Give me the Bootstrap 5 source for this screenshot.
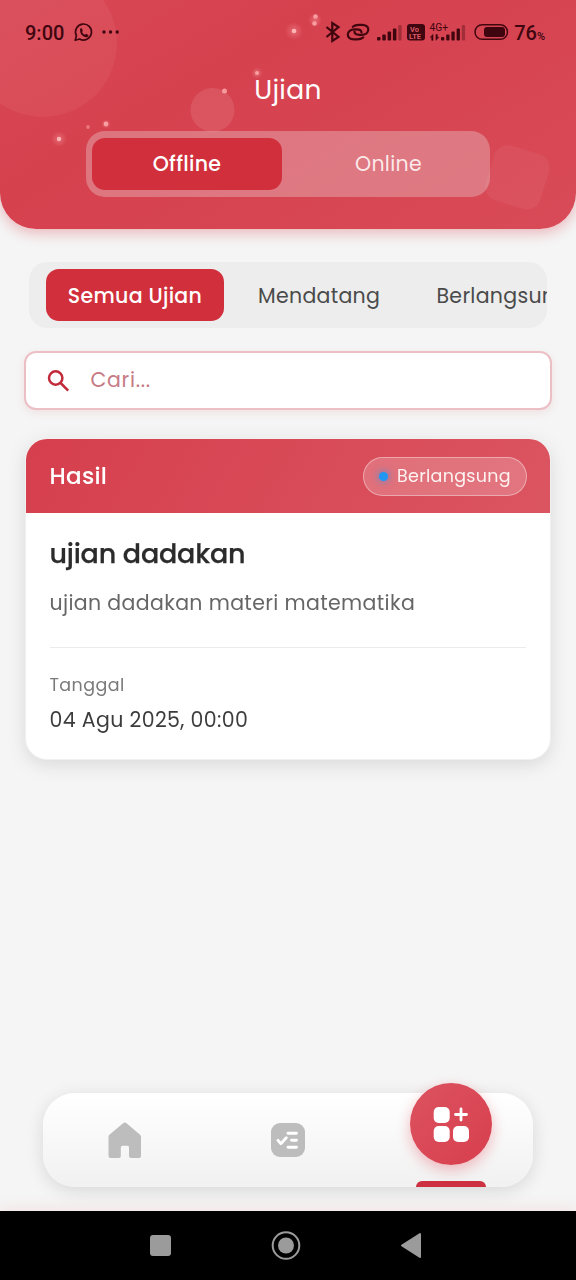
<!DOCTYPE html>
<html lang="id">
<head>
<meta charset="utf-8">
<meta name="viewport" content="width=device-width, initial-scale=1">
<title>Ujian</title>
<link href="https://cdn.jsdelivr.net/npm/bootstrap@5.3.0/dist/css/bootstrap.min.css" rel="stylesheet">
<style>
:root{--brand:#d12f3c}
body{font-family:Poppins,Inter,"Open Sans",sans-serif;background:#f5f5f5;height:1280px;overflow:hidden;line-height:1;letter-spacing:.3px}
.app{width:576px;height:1280px}
.hero{height:229px;border-radius:0 0 36px 36px;background:linear-gradient(150deg,#d94855 0%,#d6414e 35%,#d74552 65%,#d94b58 100%);box-shadow:0 4px 14px rgba(209,47,60,.32);overflow:hidden}
.statusbar{height:64px;padding:2px 31px 0 25px;font-family:Roboto,sans-serif;font-size:20px;font-weight:500;color:#40060f;letter-spacing:0}
.deco{position:absolute;inset:0}
.title{font-size:26.5px;font-weight:400;height:52px;line-height:52px;letter-spacing:.3px}
.seg{width:404px;height:66px;border-radius:19px;padding:7px 6px;margin-top:15px;background:rgba(232,190,195,.42)}
.seg-item{font-size:20.5px;border-radius:13px;color:rgba(255,244,244,.93)}
.seg-on{background:var(--brand);color:#fff;font-weight:500;width:190px}
.seg-off{padding-left:11px}
.tabs{margin:33px 29px 0;height:66px;border-radius:18px;background:#ededed;padding:7px 17px;overflow:hidden;font-size:20.5px;color:#4a4a4a}
.tabs span{padding-top:2px}
.tab-on{width:178px;border-radius:13px;background:var(--brand);color:#fff;font-weight:500}
.tab-next{margin-left:34px;width:178.500px}
.search{margin:23px 24px 0;height:59px;border:2.5px solid #ecbfc5;border-radius:12px;background:#fff;padding-left:19.500px;gap:19px;color:#c67a84;font-size:20.5px;letter-spacing:.7px;box-shadow:0 3px 8px rgba(209,47,60,.1)}
.exam{margin:28px 25px 0;height:322px;border:1px solid #f0f0f0;border-radius:22px;overflow:hidden;background:#fff}
.exam-wrap{filter:drop-shadow(0 5px 9px rgba(0,0,0,.11))}
.exam-head{height:74px;padding:0 23px 0 23.500px;background:linear-gradient(120deg,#d63f4d,#db5561);color:#fff;font-size:23px;font-weight:500}
.pill{height:39px;width:164px;border:1px solid rgba(255,255,255,.38);background:rgba(255,255,255,.2);font-size:17.5px;font-weight:400;padding-left:15px;gap:9px;color:rgba(255,250,248,.95)}
.pill span{padding-top:1px}
.dot{width:9px;height:9px;background:#2196f3;box-shadow:0 0 6px 2px rgba(33,150,243,.4)}
.exam-body{padding:0 24px 0 23.500px}
.name{font-size:27px;font-weight:500;color:#2b2b2b;height:81px;line-height:81px;letter-spacing:-.22px;-webkit-text-stroke:.25px #2b2b2b}
.desc{font-size:20.5px;color:#666;height:53.500px;line-height:18px;border-bottom:1.5px solid #ebebeb;letter-spacing:.36px}
.lab{font-size:17.5px;color:#7a7a7a;line-height:20px;margin-top:27.500px;letter-spacing:.4px}
.when{font-size:20.5px;color:#3c3c3c;line-height:24px;margin-top:13px;letter-spacing:.36px}
.dock{left:43px;top:1093px;width:490px;height:94px;border-radius:32px;background:linear-gradient(#fff,#f1f1f1);box-shadow:0 4px 18px rgba(0,0,0,.12)}
.fab{width:82px;height:82px;left:367px;top:-10px;border-radius:50%;background:linear-gradient(135deg,#dc5260,#d83f4d);box-shadow:0 5px 14px rgba(225,50,65,.32)}
.ind{left:373px;bottom:0;width:70px;height:6px;border-radius:6px 6px 0 0;background:#cd3040}
.sysnav{left:0;top:1211px;width:576px;height:69px;background:#000;box-shadow:0 -4px 14px rgba(225,50,65,.08)}
</style>
</head>
<body>
<div class="app position-relative overflow-hidden">
<header class="hero position-relative">
  <svg class="deco" width="576" height="229">
    <defs><radialGradient id="glow"><stop offset="0" stop-color="#ffb0b0" stop-opacity=".35"/><stop offset="1" stop-color="#ffb0b0" stop-opacity="0"/></radialGradient></defs>
    <circle cx="43" cy="43" r="74" fill="#fff" opacity=".05"/>
    <circle cx="212.500" cy="110" r="22" fill="#fff" opacity=".1"/>
    <rect x="489" y="149" width="57" height="57" rx="14" transform="rotate(17 518 177)" fill="#fff" opacity=".05"/>
    <g fill="url(#glow)"><circle cx="59" cy="139" r="8"/><circle cx="294" cy="31" r="9"/><circle cx="257" cy="73" r="6"/><circle cx="315" cy="20" r="7"/><circle cx="106" cy="124" r="5"/></g>
    <g fill="#ffb5b5"><circle cx="59" cy="139" r="2.200"/><circle cx="294" cy="31" r="2.300"/><g opacity=".75"><circle cx="257" cy="73" r="2"/><circle cx="315.500" cy="16.500" r="2.300"/><circle cx="314.500" cy="23.500" r="2.300"/><circle cx="106" cy="124" r="2.400"/><circle cx="224.500" cy="91" r="2.500"/></g><circle cx="88" cy="127" r="1.900" opacity=".45"/></g>
  </svg>
  <div class="statusbar position-relative d-flex align-items-center">
    <span>9:00</span>
    <svg class="deco" width="576" height="64" fill="none" stroke="#40060f">
      <path d="M75.200 40.200l1.200-4.500a8 8 0 1 1 3.200 3.300z" stroke-width="1.700" stroke-linejoin="round"/>
      <path d="M80.300 28.500l1.200-.4 1.400 2.600-.9 1.300c.7 1.500 1.600 2.200 3 2.800l1.200-1 2.300 1.400c-.2 1.900-2 2.300-3.600 1.700-3.200-1.200-5.500-3.900-4.600-8.400z" fill="#40060f" stroke="none"/>
      <g fill="#40060f" stroke="none"><circle cx="104" cy="32" r="1.700"/><circle cx="110.500" cy="32" r="1.700"/><circle cx="117.200" cy="32" r="1.700"/></g>
      <path d="M326.500 27l12 10-6.200 4V23l6.200 4-12 10" stroke-width="2.200"/>
      <g stroke-width="2.200" stroke-linecap="round"><path d="M352.800 26.800C354.500 25.200 356.500 24.800 359 24.800H362C366 24.800 368.300 27 368.300 29.500C368.300 32.500 365.500 34.800 361.500 34.800H359.500C356.500 34.800 354.500 33.500 354.500 31.500"/><path d="M363.200 37.400C361.500 38.900 359.500 39.300 357 39.300H354C350 39.300 347.800 37.200 347.800 34.600C347.800 31.600 350.500 29.300 354.500 29.300H356.500C359.500 29.300 361.500 30.500 361.500 32.500"/></g>
      <g fill="#40060f" stroke="none"><rect x="377" y="37" width="3.500" height="3.500" rx="1"/><rect x="382.300" y="34.500" width="3.500" height="6" rx="1"/><rect x="387.600" y="31.500" width="3.500" height="9" rx="1"/><rect x="392.900" y="28.500" width="3.500" height="12" rx="1"/><rect x="398.300" y="25" width="3.300" height="15.500" rx="1" opacity=".35"/>
      <rect x="407" y="24" width="18" height="16.500" rx="3"/>
      <rect x="441" y="37" width="3.300" height="3.500" rx="1"/><rect x="446.200" y="34.500" width="3.300" height="6" rx="1"/><rect x="451.400" y="31.500" width="3.300" height="9" rx="1"/><rect x="456.600" y="28.500" width="3.300" height="12" rx="1"/><rect x="461.800" y="25" width="3.300" height="15.500" rx="1" opacity=".35"/>
      <path d="M430.300 37.200l2.700-2.700v5.800h-1.300v-3.100zM438.800 37.300L436 40.300v-5.800h1.300v2.800z" stroke="#40060f" stroke-width=".6"/><rect x="484" y="27" width="21" height="10" rx="3"/></g>
      <rect x="475" y="24.700" width="32.500" height="14.600" rx="7.300" stroke-width="1.500"/>
      <g font-family="Roboto,sans-serif" stroke="none" font-weight="700"><text x="410" y="31.500" font-size="7.500" fill="#d65a66">Vo</text><text x="409" y="39" font-size="7.500" fill="#d65a66">LTE</text><text x="429.500" y="31" font-size="10.200" font-weight="400" fill="#40060f">4G+</text></g>
    </svg>
    <span class="ms-auto">76<small style="font-size:11px">%</small></span>
  </div>
  <div class="title position-relative text-center text-white">Ujian</div>
  <div class="seg position-relative d-flex mx-auto">
    <div class="seg-item seg-on d-flex align-items-center justify-content-center">Offline</div>
    <div class="seg-item seg-off flex-fill d-flex align-items-center justify-content-center">Online</div>
  </div>
</header>
<nav class="tabs d-flex align-items-stretch">
  <div class="tab-on flex-shrink-0 d-flex align-items-center justify-content-center"><span>Semua Ujian</span></div>
  <div class="tab-next flex-shrink-0 d-flex align-items-center"><span>Mendatang</span></div>
  <div class="flex-shrink-0 d-flex align-items-center"><span>Berlangsung</span></div>
</nav>
<div class="search d-flex align-items-center">
  <svg width="26" height="26" viewBox="0 0 26 26" fill="none" stroke="#c22b3b" stroke-width="2.500"><circle cx="9.700" cy="10" r="6.700"/><path d="M14.600 15l7.600 7.600"/></svg>
  <span>Cari...</span>
</div>
<div class="exam-wrap">
<section class="exam">
  <div class="exam-head d-flex align-items-center justify-content-between"><span>Hasil</span>
    <div class="pill rounded-pill d-flex align-items-center"><i class="dot rounded-circle"></i><span>Berlangsung</span></div>
  </div>
  <div class="exam-body">
    <div class="name">ujian dadakan</div>
    <div class="desc">ujian dadakan materi matematika</div>
    <div class="lab">Tanggal</div>
    <div class="when">04 Agu 2025, 00:00</div>
  </div>
</section>
</div>
<nav class="dock position-absolute">
  <svg class="deco" width="490" height="94">
    <path d="M66.700 41.500L80.400 30q1.400-1.100 2.800 0L96.800 41.500q1.200.9 1.200 2.300V63q0 2-2 2h-8q-2 0-2-2v-8.800q0-1.500-1.500-1.500h-5.200q-1.500 0-1.500 1.500V63q0 2-2 2h-8.300q-2 0-2-2V43.800q0-1.400 1.200-2.300z" fill="#bdbdbd"/>
    <rect x="228" y="30" width="34" height="34" rx="9" fill="#bdbdbd"/>
    <g fill="none" stroke="#fff" stroke-width="2.900" stroke-linecap="round" stroke-linejoin="round"><path d="M235 47.300l2.800 3.400 5.500-5.900M245 40.300h8.500M248.500 47.300h5M245 54.300h8.500"/></g>
  </svg>
  <div class="ind position-absolute"></div>
  <div class="fab position-absolute">
    <svg width="82" height="82" fill="#fff"><rect x="23.700" y="24" width="16" height="16" rx="5"/><rect x="23.700" y="43" width="16" height="16" rx="5"/><rect x="43" y="43" width="16" height="16" rx="5"/><path d="M51 26v11M45.500 31.500h11" stroke="#fff" stroke-width="2.800" stroke-linecap="round"/></svg>
  </div>
</nav>
<div class="sysnav position-absolute">
  <svg width="576" height="69"><rect x="150" y="24" width="21" height="21" rx="3" fill="#9b9b9b"/><circle cx="286" cy="34.500" r="13.300" fill="none" stroke="#9b9b9b" stroke-width="2"/><circle cx="286" cy="34.500" r="8" fill="#9b9b9b"/><path d="M402 34.500L420 23v23z" fill="#9b9b9b" stroke="#9b9b9b" stroke-width="2" stroke-linejoin="round"/></svg>
</div>
</div>
</body>
</html>
